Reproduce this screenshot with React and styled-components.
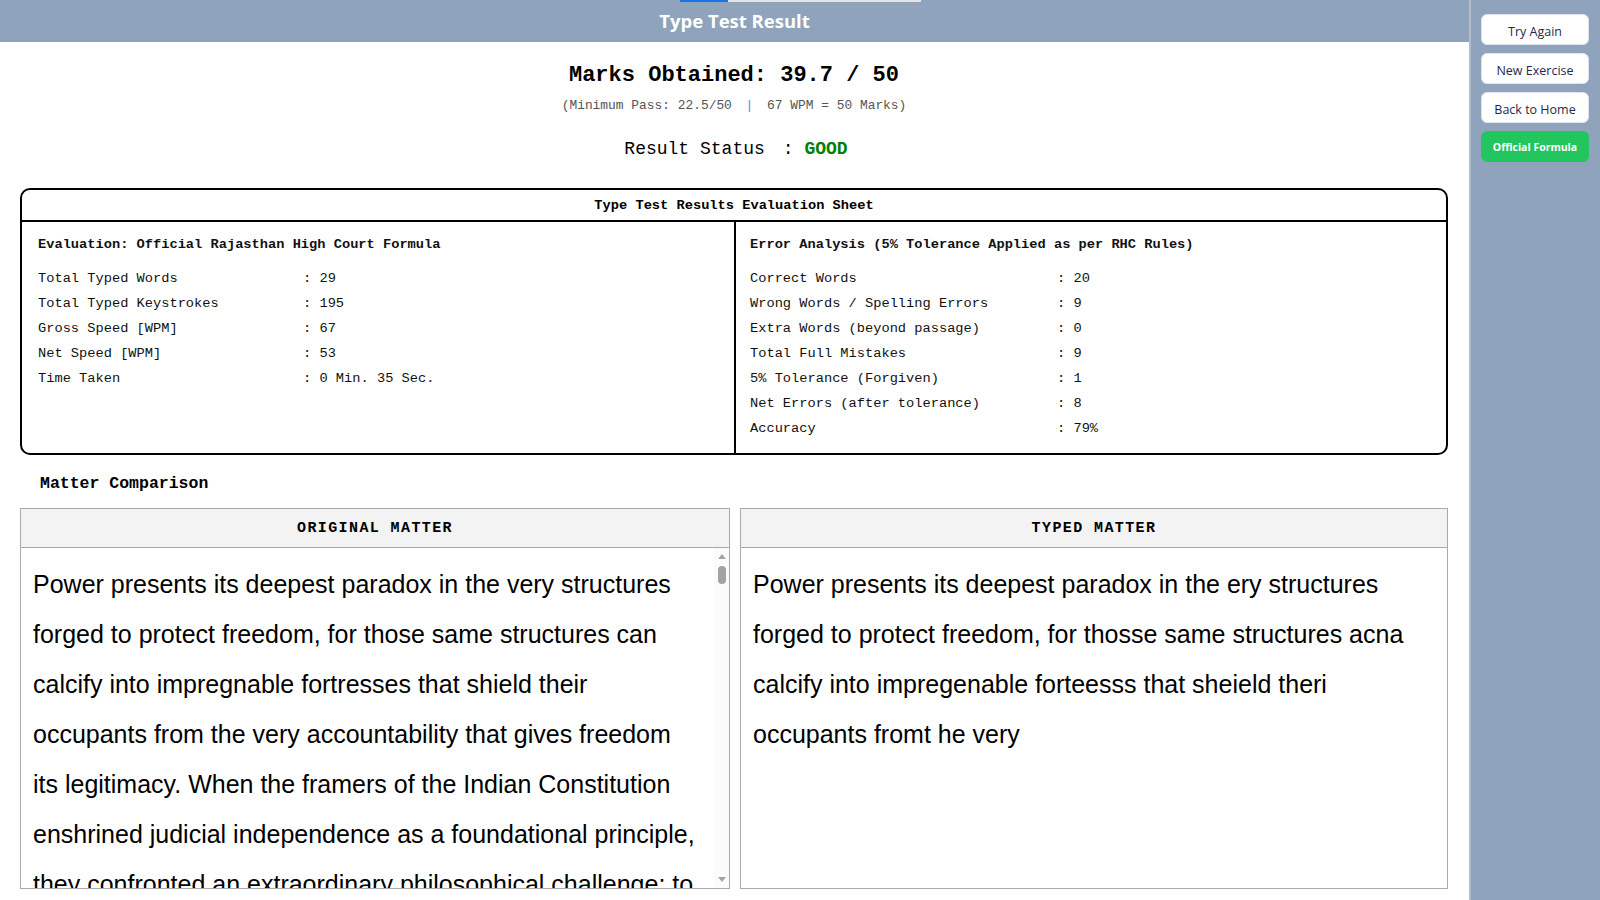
import React from "react";
import styled, { createGlobalStyle } from "styled-components";

const GlobalStyle = createGlobalStyle`
  html, body {
    margin: 0;
    padding: 0;
    height: 100%;
    overflow: hidden;
  }
  body {
    font-family: "Liberation Mono", "DejaVu Sans Mono", monospace;
    color: #000;
    background: #fff;
  }
  * { box-sizing: border-box; }
`;

const mono = `"Liberation Mono", "DejaVu Sans Mono", monospace`;
const sans = `"Open Sans", "Noto Sans", "Liberation Sans", sans-serif`;

const original =
  "Power presents its deepest paradox in the very structures forged to protect freedom, for those same structures can calcify into impregnable fortresses that shield their occupants from the very accountability that gives freedom its legitimacy. When the framers of the Indian Constitution enshrined judicial independence as a foundational principle, they confronted an extraordinary philosophical challenge: to create an institution powerful enough to restrain the other organs of the state, yet answerable enough to remain faithful to the people in whose name it speaks. The answer they devised was neither perfect nor final, for it rested upon the hope that judges would be guided by conscience as much as by law, and that the dignity of the office would itself become a discipline.";

const typed =
  "Power presents its deepest paradox in the ery structures forged to protect freedom, for thosse same structures acna calcify into impregenable forteesss that sheield theri occupants fromt he very";

const leftRows = [
  ["Total Typed Words", "29"],
  ["Total Typed Keystrokes", "195"],
  ["Gross Speed [WPM]", "67"],
  ["Net Speed [WPM]", "53"],
  ["Time Taken", "0 Min. 35 Sec."],
];

const rightRows = [
  ["Correct Words", "20"],
  ["Wrong Words / Spelling Errors", "9"],
  ["Extra Words (beyond passage)", "0"],
  ["Total Full Mistakes", "9"],
  ["5% Tolerance (Forgiven)", "1"],
  ["Net Errors (after tolerance)", "8"],
  ["Accuracy", "79%"],
];

function StatColumn({ title, rows, labelWidth, divider }) {
  return (
    <Column $divider={divider}>
      <ColumnTitle>{title}</ColumnTitle>
      {rows.map(([label, value]) => (
        <StatRow key={label}>
          <StatLabel $width={labelWidth}>{label}</StatLabel>
          <span>: {value}</span>
        </StatRow>
      ))}
    </Column>
  );
}

function MatterPanel({ title, text, scroll }) {
  return (
    <Panel>
      <PanelHead>{title}</PanelHead>
      <PanelBody>
        <PanelText>{text}</PanelText>
        {scroll && (
          <ScrollTrack>
            <Arrow $up />
            <Thumb />
            <Arrow />
          </ScrollTrack>
        )}
      </PanelBody>
    </Panel>
  );
}

export default function App() {
  return (
    <>
      <GlobalStyle />
      <Page>
        <Main>
          <LoadBar>
            <LoadFill />
          </LoadBar>
          <Banner>Type Test Result</Banner>
          <Content>
            <Marks>Marks Obtained: 39.7 / 50</Marks>
            <PassNote>
              (Minimum Pass: 22.5/50 <Pipe>|</Pipe> 67 WPM = 50 Marks)
            </PassNote>
            <Status>
              <StatusLabel>Result Status</StatusLabel>: <Good>GOOD</Good>
            </Status>

            <Sheet>
              <SheetHead>Type Test Results Evaluation Sheet</SheetHead>
              <SheetBody>
                <StatColumn
                  title="Evaluation: Official Rajasthan High Court Formula"
                  rows={leftRows}
                  labelWidth={265}
                />
                <StatColumn
                  title="Error Analysis (5% Tolerance Applied as per RHC Rules)"
                  rows={rightRows}
                  labelWidth={307}
                  divider
                />
              </SheetBody>
            </Sheet>

            <SectionTitle>Matter Comparison</SectionTitle>
            <Compare>
              <MatterPanel title="ORIGINAL MATTER" text={original} scroll />
              <MatterPanel title="TYPED MATTER" text={typed} />
            </Compare>
          </Content>
        </Main>

        <Sidebar>
          <SideButton>Try Again</SideButton>
          <SideButton>New Exercise</SideButton>
          <SideButton>Back to Home</SideButton>
          <SideButton $primary>Official Formula</SideButton>
        </Sidebar>
      </Page>
    </>
  );
}

const Page = styled.div`
  display: flex;
  width: 1600px;
  height: 900px;
`;

const Main = styled.div`
  position: relative;
  flex: 1;
  display: flex;
  flex-direction: column;
  min-width: 0;
`;

const LoadBar = styled.div`
  position: absolute;
  top: 0;
  left: 680px;
  width: 241px;
  height: 2px;
  background: #e4e4e4;
`;

const LoadFill = styled.div`
  width: 48px;
  height: 100%;
  background: #1a73e8;
`;

const Banner = styled.div`
  height: 42px;
  padding-bottom: 2px;
  background: #8fa3bd;
  color: #fff;
  font-family: ${sans};
  font-weight: 700;
  font-size: 18.5px;
  display: flex;
  align-items: center;
  justify-content: center;
`;

const Content = styled.div`
  flex: 1;
  display: flex;
  flex-direction: column;
  padding: 0 21px 11px 20px;
  min-height: 0;
`;

const Marks = styled.h1`
  margin: 20px 0 0;
  font-family: ${mono};
  font-size: 22px;
  line-height: 28px;
  font-weight: 700;
  text-align: center;
`;

const PassNote = styled.div`
  margin-top: 7px;
  font-size: 12.9px;
  line-height: 18px;
  color: #555;
  text-align: center;
  white-space: pre;
`;

const Pipe = styled.span`
  color: #4a90d9;
  margin: 0 6px;
`;

const Status = styled.div`
  margin-top: 22px;
  font-size: 18px;
  line-height: 24px;
  text-align: center;
  padding-left: 4px;
`;

const StatusLabel = styled.span`
  margin-right: 18px;
`;

const Good = styled.span`
  color: #008000;
  font-weight: 700;
`;

const Sheet = styled.div`
  margin-top: 27px;
  border: 2px solid #000;
  border-radius: 10px;
`;

const SheetHead = styled.div`
  height: 32px;
  border-bottom: 2px solid #000;
  display: flex;
  align-items: center;
  justify-content: center;
  font-size: 13.7px;
  font-weight: 700;
`;

const SheetBody = styled.div`
  display: grid;
  grid-template-columns: 1fr 1fr;
`;

const Column = styled.div`
  padding: 13px 16px 12px ${(p) => (p.$divider ? "14px" : "16px")};
  border-left: ${(p) => (p.$divider ? "2px solid #000" : "none")};
  font-size: 13.7px;
  color: #111;
`;

const ColumnTitle = styled.div`
  font-weight: 700;
  line-height: 20px;
  margin-bottom: 11px;
`;

const StatRow = styled.div`
  display: flex;
  line-height: 25px;
  white-space: pre;
`;

const StatLabel = styled.span`
  width: ${(p) => p.$width}px;
  flex-shrink: 0;
`;

const SectionTitle = styled.div`
  margin: 18px 0 0 20px;
  font-size: 16.5px;
  line-height: 22px;
  font-weight: 700;
`;

const Compare = styled.div`
  margin-top: 13px;
  flex: 1;
  min-height: 0;
  display: grid;
  grid-template-columns: 710px 1fr;
  gap: 10px;
`;

const Panel = styled.div`
  border: 1px solid #aaa;
  display: flex;
  flex-direction: column;
  min-height: 0;
`;

const PanelHead = styled.div`
  height: 39px;
  flex-shrink: 0;
  background: #f3f3f3;
  border-bottom: 1px solid #aaa;
  display: flex;
  align-items: center;
  justify-content: center;
  font-size: 15px;
  font-weight: 700;
  letter-spacing: 1.4px;
`;

const PanelBody = styled.div`
  flex: 1;
  min-height: 0;
  display: flex;
`;

const PanelText = styled.div`
  flex: 1;
  min-width: 0;
  overflow: hidden;
  padding: 11px 12px;
  font-family: "Liberation Sans", Arial, sans-serif;
  font-size: 25px;
  line-height: 50px;
  color: #000;
`;

const ScrollTrack = styled.div`
  width: 15px;
  flex-shrink: 0;
  display: flex;
  flex-direction: column;
  align-items: center;
  padding: 6px 0;
  background: #fbfbfb;
`;

const Arrow = styled.div`
  width: 0;
  height: 0;
  border-left: 4.5px solid transparent;
  border-right: 4.5px solid transparent;
  ${(p) =>
    p.$up
      ? "border-bottom: 5px solid #a3a3a3;"
      : "border-top: 5px solid #a3a3a3; margin-top: auto;"}
`;

const Thumb = styled.div`
  width: 8px;
  height: 18px;
  margin-top: 7px;
  border-radius: 4px;
  background: #a3a3a3;
`;

const Sidebar = styled.div`
  width: 131px;
  flex-shrink: 0;
  background: #8fa3bd;
  border-left: 2px solid #b3bdca;
  padding: 14px 11px 0 10px;
  display: flex;
  flex-direction: column;
  gap: 8px;
`;

const SideButton = styled.button`
  height: 31px;
  border-radius: 6px;
  border: 1px solid ${(p) => (p.$primary ? "#22c55e" : "#dfe3ea")};
  background: ${(p) => (p.$primary ? "#22c55e" : "#fff")};
  color: ${(p) => (p.$primary ? "#fff" : "#1e2a4a")};
  font-family: ${sans};
  font-size: ${(p) => (p.$primary ? "10.5px" : "12.5px")};
  font-weight: ${(p) => (p.$primary ? 700 : 400)};
  cursor: pointer;
  padding: ${(p) => (p.$primary ? "1px 0 0" : "3px 0 0")};
`;
